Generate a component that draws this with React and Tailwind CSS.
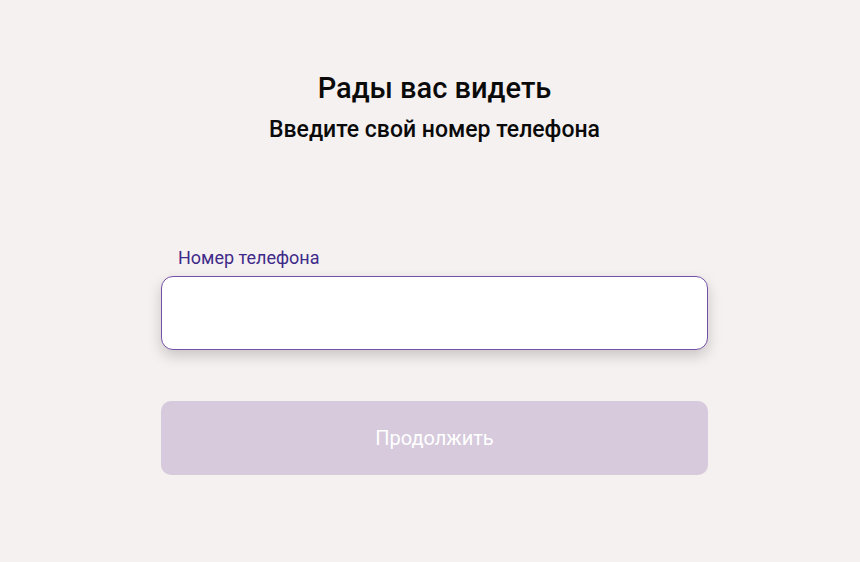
export default function App() {
  return (
    <div className="min-h-[562px] w-full bg-[#f5f1f0] pl-[9px]" style={{ fontFamily: "Roboto, 'Noto Sans', sans-serif" }}>
      <div className="mx-auto flex w-[547px] flex-col items-stretch pt-[70px]">
        <h1 className="text-center text-[29px] font-medium leading-[36px] text-[#0a0a0a]">Рады вас видеть</h1>
        <p className="mt-[9px] text-center text-[23px] font-medium leading-[30px] text-[#0a0a0a]">Введите свой номер телефона</p>
        <label className="mt-[102px] pl-[17px] text-[18px] leading-[22px] text-[#3f2a8a]">Номер телефона</label>
        <input
          type="tel"
          className="mt-[7px] h-[74px] w-full rounded-[12px] border border-[#7451a6] bg-white px-4 text-[18px] shadow-[0_6px_14px_rgba(0,0,0,0.18)] outline-none"
        />
        <button className="mt-[51px] h-[74px] w-full rounded-[10px] bg-[#d6cadc] text-[20px] text-white">Продолжить</button>
      </div>
    </div>
  );
}
